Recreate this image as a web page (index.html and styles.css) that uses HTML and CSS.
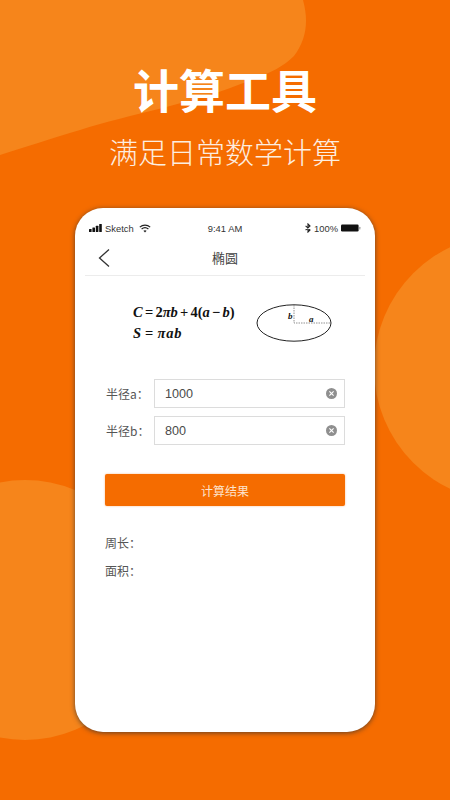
FILE: index.html
```html
<!DOCTYPE html>
<html lang="zh-CN">
<head>
<meta charset="utf-8">
<title>计算工具</title>
<link rel="stylesheet" href="styles.css">
</head>
<body>
<main class="page">
  <svg class="backdrop" width="450" height="800" viewBox="0 0 450 800" aria-hidden="true">
    <path class="blob" d="M0 0H303C309 22 306 40 294 56C280 70 262 76 238 85C190 104 130 114 80 130C50 139 25 147 0 155Z"/>
    <circle class="blob" cx="508" cy="368" r="134"/>
    <circle class="blob" cx="25" cy="610" r="130"/>
  </svg>
  <header class="hero">
    <h1 class="hero-title">计算工具</h1>
    <p class="hero-sub">满足日常数学计算</p>
  </header>
  <section class="phone">
    <div class="status">
      <div class="status-left">
        <svg width="15" height="8" viewBox="0 0 15 8" fill="#111"><rect x="0" y="5" width="2.6" height="3" rx=".5"/><rect x="3.4" y="3.5" width="2.6" height="4.5" rx=".5"/><rect x="6.8" y="1.7" width="2.6" height="6.3" rx=".5"/><rect x="10.2" y="0" width="2.6" height="8" rx=".5"/></svg>
        <span>Sketch</span>
        <svg class="wifi" width="12" height="9" viewBox="0 0 12 9" fill="none" stroke="#222" stroke-width="1.2"><path d="M.8 3.1C3.8.4 8.2.4 11.2 3.1"/><path d="M2.6 5C4.6 3.3 7.4 3.3 9.4 5"/><path d="M6 8.6 4.4 6.8C5.4 6 6.6 6 7.6 6.8Z" fill="#222" stroke="none"/></svg>
      </div>
      <span class="status-time">9:41 AM</span>
      <div class="status-right">
        <svg width="6" height="10" viewBox="0 0 6 10" fill="none" stroke="#222" stroke-width="1.1"><path d="M.6 2.8 5 6.9 3 9V1L5 3.1.6 7.2"/></svg>
        <span>100%</span>
        <svg width="20" height="8" viewBox="0 0 20 8"><rect x="0" y="0.5" width="17.6" height="7" rx="1.2" fill="#111"/><rect x="18.2" y="2.8" width="1.2" height="2.6" rx=".5" fill="#999"/></svg>
      </div>
    </div>
    <nav class="nav">
      <svg class="back" width="14" height="20" viewBox="0 0 14 20" fill="none" stroke="#333" stroke-width="1.3"><path d="M12 1.5 2.5 10 12 18.5"/></svg>
      <span class="nav-title">椭圆</span>
    </nav>
    <div class="formula">
      <div class="formula-text">
        <div class="formula-c"><i>C</i> = 2<i>πb</i> + 4(<i>a</i> − <i>b</i>)</div>
        <div class="formula-s"><i>S</i> = <i>πab</i></div>
      </div>
      <div class="diagram">
        <svg width="76" height="38" viewBox="0 0 76 38" fill="none">
          <ellipse cx="38" cy="19" rx="37" ry="18.2" stroke="#222" stroke-width="1"/>
          <path d="M38 1V19H75" stroke="#777" stroke-width=".8" stroke-dasharray="1.5 1"/>
          <text x="32" y="15" class="dia-label">b</text>
          <text x="53" y="18" class="dia-label">a</text>
        </svg>
      </div>
    </div>
    <div class="fields">
      <div class="field">
        <span class="field-label">半径a：</span>
        <div class="input"><span class="input-value">1000</span>
          <svg width="11" height="11" viewBox="0 0 11 11"><circle cx="5.5" cy="5.5" r="5.5" fill="#8f8f8f"/><path d="M3.4 3.4 7.6 7.6M7.6 3.4 3.4 7.6" stroke="#fff" stroke-width="1.1"/></svg>
        </div>
      </div>
      <div class="field">
        <span class="field-label">半径b：</span>
        <div class="input"><span class="input-value">800</span>
          <svg width="11" height="11" viewBox="0 0 11 11"><circle cx="5.5" cy="5.5" r="5.5" fill="#8f8f8f"/><path d="M3.4 3.4 7.6 7.6M7.6 3.4 3.4 7.6" stroke="#fff" stroke-width="1.1"/></svg>
        </div>
      </div>
    </div>
    <button class="calc" type="button">计算结果</button>
    <div class="results">
      <p>周长：</p>
      <p>面积：</p>
    </div>
  </section>
</main>
</body>
</html>
```
FILE: styles.css
```css
* { box-sizing: border-box; }
html, body { margin: 0; padding: 0; }
body { font-family: "Noto Sans CJK SC", "Liberation Sans", sans-serif; }
.page {
  position: relative;
  width: 450px;
  height: 800px;
  overflow: hidden;
  background: #f56c00;
}
.backdrop { position: absolute; left: 0; top: 0; }
.blob { fill: #f6851b; }
.hero {
  position: relative;
  display: flex;
  flex-direction: column;
  align-items: center;
  padding-top: 56px;
  color: #fff;
}
.hero-title {
  margin: 0;
  font-size: 46px;
  line-height: 64px;
  font-weight: 700;
}
.hero-sub {
  margin: 0;
  padding-top: 10px;
  font-size: 29px;
  line-height: 42px;
  font-weight: 300;
  color: #fdeee0;
}
.phone {
  position: relative;
  width: 300px;
  height: 524px;
  margin: 36px auto 0;
  padding: 0 10px;
  border-radius: 28px;
  background: #fff;
  box-shadow: 0 1px 5px rgba(50, 50, 50, .75);
  color: #444;
}
.status {
  display: grid;
  grid-template-columns: 1fr auto 1fr;
  align-items: center;
  height: 32px;
  padding: 8px 4px 0;
  font-family: "Liberation Sans", sans-serif;
  font-size: 9.4px;
  color: #333;
}
.status-left, .status-right { display: flex; align-items: center; }
.status-left { gap: 1px; }
.status-left .wifi { margin-left: 4px; }
.status-right { justify-content: flex-end; gap: 3px; }
.nav {
  position: relative;
  display: flex;
  align-items: center;
  justify-content: center;
  height: 36px;
  border-bottom: 1px solid #ececec;
}
.back { position: absolute; left: 12px; top: 8px; }
.nav-title { font-size: 13px; color: #444; }
.formula {
  display: flex;
  align-items: center;
  height: 66px;
  margin-top: 14px;
  padding-left: 48px;
}
.formula-text {
  width: 123px;
  font-family: "Liberation Serif", serif;
  font-weight: 700;
  font-size: 14.5px;
  line-height: 21px;
  color: #111;
  white-space: nowrap;
}
.formula-c { word-spacing: -1.4px; }
.formula-s { letter-spacing: .9px; word-spacing: -1.4px; }
.diagram { display: flex; }
.dia-label {
  font-family: "Liberation Serif", serif;
  font-style: italic;
  font-weight: 700;
  font-size: 9px;
  fill: #111;
}
.fields {
  display: flex;
  flex-direction: column;
  gap: 8px;
  margin-top: 23px;
  padding: 0 20px 0 21px;
}
.field { display: flex; align-items: center; }
.field-label {
  width: 48px;
  font-size: 12px;
  color: #555;
  white-space: nowrap;
}
.input {
  flex: 1;
  display: flex;
  align-items: center;
  justify-content: space-between;
  height: 29px;
  padding: 0 7px 0 10px;
  border: 1px solid #dcdcdc;
  font-family: "Liberation Sans", sans-serif;
  font-size: 12.6px;
  color: #4a4a4a;
}
.input-value { padding-top: 1px; }
.calc {
  display: block;
  width: 240px;
  height: 32px;
  margin: 29px 0 0 20px;
  padding: 0;
  border: 0;
  border-radius: 2px;
  background: #f56c00;
  box-shadow: 0 0 2px rgba(245, 108, 0, .5);
  font-family: inherit;
  font-size: 12px;
  color: #fde3cc;
}
.results { margin-top: 27px; padding-left: 20px; }
.results p {
  margin: 0 0 8px;
  font-size: 12px;
  line-height: 20px;
  color: #555;
}
```
